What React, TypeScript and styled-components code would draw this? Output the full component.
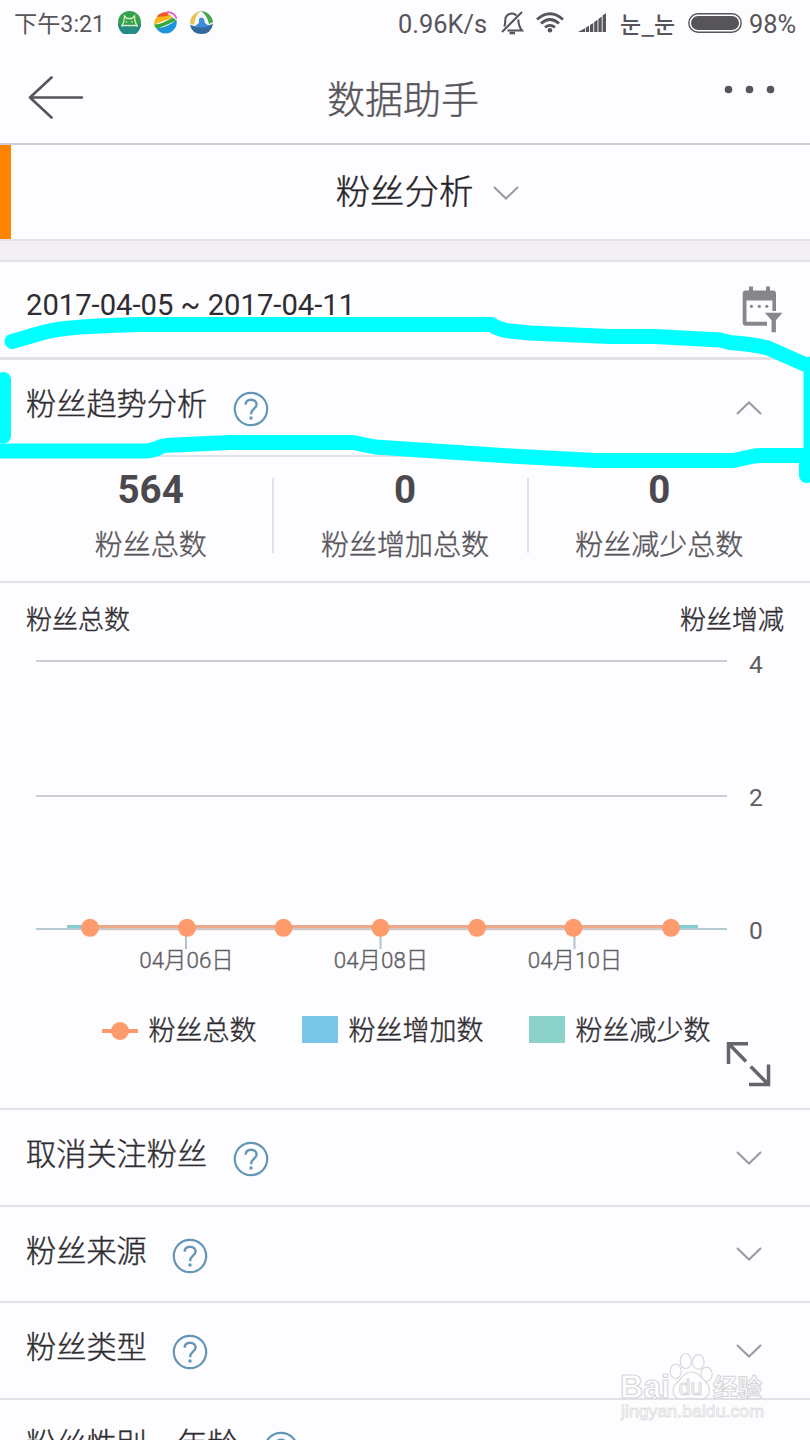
import React from "react";
import styled, { createGlobalStyle, css } from "styled-components";

const LINE = "#e4e2e6";
const INK = "#2f2d31";
const GREY = "#57555a";

const demiLight = css`
  font-weight: 300;
  -webkit-text-stroke: 0.4px currentColor;
`;

const GlobalStyle = createGlobalStyle`
  *, *::before, *::after { box-sizing: border-box; }
  body {
    margin: 0;
    background: #fdfcfe;
    font-family: Roboto, "Noto Sans CJK SC", sans-serif;
    font-weight: 400;
    color: ${INK};
  }
  svg { display: block; flex: none; }
`;

const Screen = styled.main`
  position: relative;
  width: 810px;
  height: 1440px;
  overflow: hidden;
  display: flex;
  flex-direction: column;
  background: #fdfcfe;
`;

const StatusBar = styled.div`
  flex: none;
  height: 46px;
  padding: 0 14px 0 14px;
  display: flex;
  align-items: center;
  color: ${GREY};
  font-size: 25px;
  line-height: 44px;
  white-space: nowrap;
`;

const StatusText = styled.span<{ $width: number; $size?: number; $kr?: boolean }>`
  width: ${(p) => p.$width}px;
  padding-top: 2px;
  font-size: ${(p) => p.$size ?? 25.4}px;
  ${(p) => p.$kr && `font-family: "Noto Sans CJK KR", sans-serif; font-weight: 500; padding-top: 0;`}
`;

const AppIcons = styled.div`
  display: flex;
  gap: 13px;
  margin-left: 14px;
  margin-right: auto;
  padding-bottom: 1px;
`;

const StatusGlyph = styled.div<{ $gap: number }>`
  margin-right: ${(p) => p.$gap}px;
  padding-bottom: 1px;
`;

const Header = styled.header`
  flex: none;
  height: 99px;
  border-bottom: 2px solid #cfcdd1;
  display: grid;
  grid-template-columns: 1fr auto 1fr;
  align-items: center;
  padding: 0 34px 0 28px;
  color: ${GREY};
`;

const Title = styled.h1`
  margin: 0;
  padding: 11px 0 0 2px;
  font-size: 38px;
  line-height: 50px;
  ${demiLight}
`;

const BackIcon = styled.div`
  padding-top: 6px;
`;

const MoreIcon = styled.div`
  justify-self: end;
  padding-bottom: 11px;
`;

const Selector = styled.div`
  flex: none;
  height: 96px;
  border-bottom: 2px solid ${LINE};
  display: grid;
  grid-template-columns: 11px 1fr;
`;

const Accent = styled.div`
  background: #ff8400;
`;

const SelectorLabel = styled.div`
  display: flex;
  align-items: center;
  justify-content: center;
  gap: 20px;
  padding-left: 34px;
  font-size: 34.4px;
  ${demiLight}
  line-height: 50px;
  color: #262428;

  svg { margin-top: 1px; }
`;

const Gap = styled.div`
  flex: none;
  height: 21px;
  background: #f2f0f3;
  border-bottom: 2px solid ${LINE};
`;

const Row = styled.div<{ $height: number; $border?: number }>`
  flex: none;
  height: ${(p) => p.$height}px;
  border-bottom: ${(p) => p.$border ?? 2}px solid ${LINE};
  display: flex;
  align-items: center;
  padding: 0 48px 5px 26px;
  font-size: 30.2px;
  line-height: 44px;
  white-space: nowrap;
`;

const RowTitle = styled.span`
  ${demiLight}
`;

const DateText = styled.span`
  margin-right: auto;
  padding-bottom: 4px;
  font-size: 29.2px;
`;

const CalendarSlot = styled.div`
  margin-right: -21px;
  padding-top: 4px;
`;

const Help = styled.div`
  margin: 8px auto 0 25.5px;
`;

const Chevron = styled.div`
  padding-top: 5px;
`;

const Stats = styled.section`
  flex: none;
  height: 126px;
  border-bottom: 2px solid ${LINE};
  padding: 0 29px 0 20px;
  display: flex;
`;

const Stat = styled.div`
  flex: 1;
  padding: 11px 0 0 9px;
  display: flex;
  flex-direction: column;
  align-items: center;
  color: #4b494d;
`;

const StatValue = styled.strong`
  font-size: 38.5px;
  line-height: 44px;
  font-weight: 700;
`;

const StatLabel = styled.span`
  margin-top: 14px;
  font-size: 28px;
  ${demiLight}
  line-height: 40px;
  color: ${GREY};
  white-space: nowrap;
`;

const StatDivider = styled.i`
  width: 2px;
  height: 75px;
  margin-top: 21px;
  background: ${LINE};
`;

const ChartPanel = styled.section`
  flex: none;
  height: 527px;
  border-bottom: 2px solid ${LINE};
`;

const AxisTitles = styled.div`
  height: 57px;
  padding: 19px 26px 0;
  display: flex;
  justify-content: space-between;
  font-size: 26px;
  ${demiLight}
  line-height: 37px;
`;

const Legend = styled.div`
  height: 36px;
  margin-top: 33px;
  padding-left: 2px;
  display: flex;
  justify-content: center;
  align-items: center;
  gap: 45px;
  font-size: 27px;
  ${demiLight}
  line-height: 36px;
`;

const LegendItem = styled.div`
  display: flex;
  align-items: center;
  gap: 11px;
`;

const Swatch = styled.i<{ $color: string }>`
  width: 36px;
  height: 27px;
  margin-bottom: 3px;
  background: ${(p) => p.$color};
`;

const ExpandSlot = styled.div`
  display: flex;
  justify-content: flex-end;
  padding-right: 39px;
  margin-top: -8px;
`;

const Overlay = styled.svg`
  position: absolute;
  left: 0;
  top: 0;
  pointer-events: none;
`;

function ChevronIcon({ up = false }: { up?: boolean }) {
  return (
    <svg width="26" height="14" viewBox="0 0 26 14" fill="none" stroke="#9b999e" strokeWidth="2">
      <path d={up ? "M1 13 13 1.5 25 13" : "M1 1 13 12.5 25 1"} />
    </svg>
  );
}

function HelpIcon() {
  return (
    <svg width="36" height="36" viewBox="-18 -18 36 36" fill="none" stroke="#6397b5">
      <circle r="16.2" strokeWidth="2.2" />
      <path d="M-5.4-4.2C-5.4-7.6-3.1-9.3 0-9.3S5.6-7.5 5.6-4.6C5.6-.6.1-.4.1 5.2" strokeWidth="2.4" />
      <circle cx="0" cy="9" r="1.7" fill="#6397b5" stroke="none" />
    </svg>
  );
}

function CalendarFilterIcon() {
  return (
    <svg width="41" height="47" viewBox="742 286 41 47" fill="#88868a">
      <path d="M742.7 293.5q0-3 3-3h3.3V286.500h4v4h13V286.500h4v4h3q3 0 3 3v17.500h-3.600v-10.500H746.500v21.200H767v4.100H745.700q-3 0-3-3z" />
      <circle cx="751.400" cy="306.300" r="1.600" />
      <circle cx="759.300" cy="306.300" r="1.600" />
      <circle cx="766.800" cy="306.300" r="1.600" />
      <path d="M764.800 312.700h17.700l-6.600 7.500v12h-4.300v-12z" />
    </svg>
  );
}

function MascotIcon() {
  return (
    <svg width="23" height="23" viewBox="0 0 23 23">
      <circle cx="11.500" cy="11.500" r="11.500" fill="#36a052" />
      <path d="M0 13h23a11.500 11.500 0 0 1-23 0" fill="#268b80" />
      <path d="M4 15.500 6 10l.5-5L9 7.500h5L16.500 5l.5 5 2 5.500" fill="none" stroke="#d9f2b4" strokeWidth="1.300" />
      <path d="M3 14.500h17M8.500 10v1.500M14 10v1.500" stroke="#d9f2b4" strokeWidth="1.300" />
    </svg>
  );
}

function RainbowIcon() {
  return (
    <svg width="23" height="23" viewBox="0 0 23 23">
      <path d="M3.500 4.500Q7 1 12.500 1L16 5 3 7z" fill="#ef5a2a" />
      <path d="M2.500 6Q10 6 17 4l1 3L0 13.500Q0 9 2.500 6z" fill="#f5b71c" />
      <path d="M0 13.500Q9 13 18.500 6.500l4 3L3 18Q.5 16 0 13.500z" fill="#37a83f" />
      <path d="M2.500 17.500Q14 16 22.500 9q1.500 8-6 12.500-9 3.500-14-4" fill="#1c94d8" />
      <path d="M13 .8q8 .7 9.500 7" fill="none" stroke="#df62c5" strokeWidth="1.700" />
    </svg>
  );
}

function BallIcon() {
  return (
    <svg width="23" height="23" viewBox="0 0 23 23">
      <circle cx="11.500" cy="11.500" r="11" fill="#f5f8fa" stroke="#c9d6de" />
      <path d="M0 12Q1 3 10 0 5 5 4 14z" fill="#edc34f" />
      <path d="M11 0q10 1 12 11l-4 2Q17 4 11 0" fill="#47a646" />
      <path d="M0 14q11 4 23-1-2 10-11.500 10T0 14" fill="#326a9c" />
      <path d="M5 15q7 3 14 0l-4-3-1-4q-2.500-3-5 0v4z" fill="#3d8cdb" />
    </svg>
  );
}

function BellOffIcon() {
  return (
    <svg width="24" height="24" viewBox="0 0 24 24" fill="none" stroke={GREY} strokeWidth="2.100">
      <path d="M4.300 15.500C5.300 13.500 5.300 11.500 5.300 9a6.600 6.600 0 0 1 11.200-4.600M18.300 8.500c.2 5.500.7 7.500 3.700 11H7.500M2 21 22 1" />
      <path d="M9.500 22h5.500" strokeWidth="2.600" />
    </svg>
  );
}

function WifiIcon() {
  return (
    <svg width="28" height="21" viewBox="0 0 28 21" fill="none" stroke={GREY} strokeWidth="2.800">
      <path d="M1 7.500q13-11.500 26 0M5 11.500q9-8 18 0M9 15.400q5-4 10 0" />
      <circle cx="14" cy="18.300" r="2.300" fill={GREY} stroke="none" />
    </svg>
  );
}

function SignalIcon() {
  return (
    <svg width="28" height="19" viewBox="0 0 28 19" fill={GREY}>
      <path d="M0 19 7 15.200V19zM7.800 14.500l3.300-1.800V19H7.800zM12 12l3.300-2v9H12zM16.200 9l3.300-2.300V19h-3.300zM20.400 6l3.300-2.600V19h-3.300zM24.600 2.500 28 0v19h-3.400z" />
    </svg>
  );
}

function BatteryIcon() {
  return (
    <svg width="54" height="20" viewBox="0 0 54 20">
      <rect x=".8" y=".8" width="52.400" height="18.400" rx="9.200" fill="none" stroke={GREY} strokeWidth="1.400" />
      <rect x="3" y="3" width="48" height="14" rx="7" fill={GREY} />
    </svg>
  );
}

const points = [90, 187, 283.5, 380.5, 477, 573.5, 671];
const gridLines = [
  { y: 661, baseline: 673, value: "4" },
  { y: 796, baseline: 806, value: "2" },
  { y: 929, baseline: 938.5, value: "0" },
];
const dateTicks = [
  { x: 186, label: "04月06日" },
  { x: 380.5, label: "04月08日" },
  { x: 574.5, label: "04月10日" },
];

function TrendChart() {
  return (
    <svg width="810" height="340" viewBox="0 640 810 340" fontFamily='Roboto, "Noto Sans CJK SC", sans-serif' fill="#605e63">
      {gridLines.map((g) => (
        <React.Fragment key={g.value}>
          <path d={`M36 ${g.y}H727`} stroke={g.value === "0" ? "#b4c9d1" : "#cfcdd1"} strokeWidth="2" />
          <text x="756" y={g.baseline} fontSize="24.500" textAnchor="middle">{g.value}</text>
        </React.Fragment>
      ))}
      <path d="M67 926.500H698" stroke="#86cbd0" strokeWidth="3" />
      <path d="M90 929H671" stroke="#d0c6c5" strokeWidth="2.500" />
      <path d="M90 926.500H671" stroke="#ecaa8d" strokeWidth="3" />
      {dateTicks.map((t) => (
        <React.Fragment key={t.label}>
          <path d={`M${t.x} 930v19`} stroke="#b5c2cb" strokeWidth="2" />
          <text x={t.x + 0.5} y="968" fontSize="22.400" fontWeight="300" stroke="#605e63" strokeWidth=".35" textAnchor="middle">{t.label}</text>
        </React.Fragment>
      ))}
      {points.map((x) => (
        <circle key={x} cx={x} cy="927.800" r="9" fill="#fd9b6c" />
      ))}
    </svg>
  );
}

function Section({ title, height, open }: { title: string; height: number; open?: boolean }) {
  return (
    <Row $height={height}>
      <RowTitle>{title}</RowTitle>
      <Help><HelpIcon /></Help>
      <Chevron><ChevronIcon up={open} /></Chevron>
    </Row>
  );
}

export default function App() {
  return (
    <Screen>
      <GlobalStyle />
      <StatusBar>
        <StatusText $width={90} $size={23.2}>下午3:21</StatusText>
        <AppIcons>
          <MascotIcon />
          <RainbowIcon />
          <BallIcon />
        </AppIcons>
        <StatusText $width={102}>0.96K/s</StatusText>
        <StatusGlyph $gap={12}><BellOffIcon /></StatusGlyph>
        <StatusGlyph $gap={14}><WifiIcon /></StatusGlyph>
        <StatusGlyph $gap={14}><SignalIcon /></StatusGlyph>
        <StatusText $width={68} $size={23} $kr>눈_눈</StatusText>
        <StatusGlyph $gap={7}><BatteryIcon /></StatusGlyph>
        <StatusText $width={47}>98%</StatusText>
      </StatusBar>

      <Header>
        <BackIcon>
          <svg width="56" height="44" viewBox="28 76 56 44" fill="none" stroke={GREY} strokeWidth="2.600" strokeLinecap="round" strokeLinejoin="round">
            <path d="M51.500 77.500 30 97.500l21.500 20M30 97.500H82" />
          </svg>
        </BackIcon>
        <Title>数据助手</Title>
        <MoreIcon>
          <svg width="52" height="10" viewBox="0 0 52 10" fill={GREY}>
            <circle cx="4.500" cy="5.500" r="3.800" />
            <circle cx="25.500" cy="5.500" r="3.800" />
            <circle cx="46.500" cy="5.500" r="3.800" />
          </svg>
        </MoreIcon>
      </Header>

      <Selector>
        <Accent />
        <SelectorLabel>
          粉丝分析
          <ChevronIcon />
        </SelectorLabel>
      </Selector>
      <Gap />

      <Row $height={98} $border={3}>
        <DateText>2017-04-05 ~ 2017-04-11</DateText>
        <CalendarSlot><CalendarFilterIcon /></CalendarSlot>
      </Row>
      <Section title="粉丝趋势分析" height={97} open />

      <Stats>
        <Stat>
          <StatValue>564</StatValue>
          <StatLabel>粉丝总数</StatLabel>
        </Stat>
        <StatDivider />
        <Stat>
          <StatValue>0</StatValue>
          <StatLabel>粉丝增加总数</StatLabel>
        </Stat>
        <StatDivider />
        <Stat>
          <StatValue>0</StatValue>
          <StatLabel>粉丝减少总数</StatLabel>
        </Stat>
      </Stats>

      <ChartPanel>
        <AxisTitles>
          <span>粉丝总数</span>
          <span>粉丝增减</span>
        </AxisTitles>
        <TrendChart />
        <Legend>
          <LegendItem>
            <svg width="36" height="18" viewBox="0 0 36 18" fill="#fd9b6c">
              <rect y="7" width="36" height="4" />
              <circle cx="18" cy="9" r="9" />
            </svg>
            粉丝总数
          </LegendItem>
          <LegendItem>
            <Swatch $color="#78c6e5" />
            粉丝增加数
          </LegendItem>
          <LegendItem>
            <Swatch $color="#8bd2ca" />
            粉丝减少数
          </LegendItem>
        </Legend>
        <ExpandSlot>
          <svg width="45" height="46" viewBox="726 1041 45 46" fill="none" stroke="#66656b" strokeWidth="3.500">
            <path d="M748 1043.800H728.500V1064M729 1044l17 17.500M749 1084.500H768.500V1064.500M768 1084l-17.300-17.500" />
          </svg>
        </ExpandSlot>
      </ChartPanel>

      <Section title="取消关注粉丝" height={97} />
      <Section title="粉丝来源" height={96} />
      <Section title="粉丝类型" height={97} />
      <Section title="粉丝性别、年龄" height={97} />

      <Overlay width="810" height="1440" viewBox="0 0 810 1440">
        <g fill="none" stroke="#00ffff" strokeWidth="15" strokeLinecap="round" strokeLinejoin="round">
          <path d="M12 341.500 45 332Q65 327 110 325.500L140 324.500H491Q500 330 510 331L530 333 610 336.500H655L720 340 730 342.500Q758 345 768 348L804 364" />
          <path d="M811 364V460M806.500 455V475.500" />
          <path d="M3.500 379.500V436" />
          <path d="M-8 451H146Q155 450 160 447 165 445 175 445L230 442.500H353L375 447 405 449 510 456 595 460.500H733L752 456.500Q756 455.500 762 455.500H806" />
        </g>
        <g fill="#fefdff" stroke="#d8d7da" strokeWidth="1.200" fontFamily='"Liberation Sans", "Noto Sans CJK SC", sans-serif' fontWeight="700">
          <text x="620" y="1398" fontSize="33" textLength="50" lengthAdjust="spacingAndGlyphs">Bai</text>
          <ellipse cx="675.700" cy="1371.300" rx="5.500" ry="7.300" />
          <ellipse cx="685.700" cy="1361" rx="5.500" ry="7.500" />
          <ellipse cx="698.300" cy="1362" rx="5.800" ry="7.300" />
          <ellipse cx="706.500" cy="1374.300" rx="5.600" ry="7.200" />
          <path d="M691 1372c-7 0-9 6-13 9.500-8 7-6 17.500 4 17.500q9-1.500 18 0c10 0 12-10 6-17-5-5-8-10-15-10z" />
          <text x="678.500" y="1395" fontSize="22" fontWeight="400" strokeWidth="1" textLength="24" lengthAdjust="spacingAndGlyphs">du</text>
          <text x="713" y="1397" fontSize="24.500">经验</text>
        </g>
        <text x="621" y="1417" fontSize="17" fontFamily='"Liberation Sans", sans-serif' fill="#fefdff" stroke="#dfdee1" strokeWidth=".8" textLength="143" lengthAdjust="spacingAndGlyphs">jingyan.baidu.com</text>
      </Overlay>
    </Screen>
  );
}
